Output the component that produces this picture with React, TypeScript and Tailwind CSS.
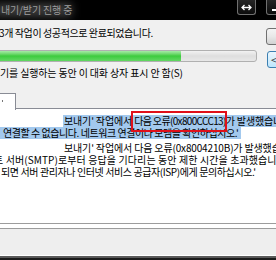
export default function App() {
  return (
    <div className="w-[276px] h-[260px] overflow-hidden bg-[#f0f0f0] text-black font-['Noto_Sans_CJK_KR','Noto_Sans',sans-serif] text-[10px] leading-[12px] tracking-[-0.15px] flex flex-col">
      {/* title bar */}
      <div className="relative h-[20px] shrink-0 bg-black flex overflow-hidden">
        <div className="absolute left-[-6px] top-[3px] w-[78px] h-[14px] bg-[#3a3a3a] blur-[4px]" />
        <span className="relative w-[237px] shrink-0 pl-[1px] pt-[4px] text-[#9c9c9c] whitespace-nowrap">내기/받기 진행 중</span>
        <div className="relative w-[19px] h-[15px] shrink-0 rounded-b-[3px] border border-t-0 border-[#707070] bg-gradient-to-b from-[#262626] to-[#0c0c0c] flex items-center justify-center">
          <svg width="11" height="7" viewBox="0 0 11 7" fill="none" stroke="white" strokeWidth="1.3">
            <path d="M1 3.5h9M3.5 1L1 3.5 3.5 6M7.5 1L10 3.5 7.5 6" />
          </svg>
        </div>
        <div className="relative ml-[10px] w-[20px] h-[15px] shrink-0 rounded-b-[3px] border border-t-0 border-[#707070] bg-gradient-to-b from-[#262626] to-[#0c0c0c]">
          <div className="absolute left-[5px] top-[9px] w-[6px] h-[2px] bg-white" />
        </div>
      </div>

      {/* status */}
      <div className="flex h-[28px] shrink-0">
        <div className="w-[267px] shrink-0 pt-[7px] -ml-[1px] tracking-[-0.4px] whitespace-nowrap overflow-hidden">3개 작업이 성공적으로 완료되었습니다.</div>
        <div className="mt-[8px] h-[17px] w-[20px] shrink-0 rounded-[3px] border border-[#707070] bg-gradient-to-b from-[#f4f4f4] via-[#e8e8e8] to-[#d2d2d2]" />
      </div>

      {/* progress */}
      <div className="flex h-[19px] shrink-0">
        <div className="mt-[2px] -ml-[4px] w-[261px] h-[12px] shrink-0 rounded-[3px] border border-[#b0b0b0] bg-gradient-to-b from-[#f2f2f2] via-[#dedede] to-[#e8e8e8] overflow-hidden flex">
          <div className="w-[184px] h-full bg-gradient-to-b from-[#a6eba6] via-[#3ccb3c] to-[#62d862]" />
        </div>
        <div className="ml-[10px] mt-[3px] h-[17px] w-[20px] shrink-0 rounded-[3px] border border-[#3c7fb1] bg-gradient-to-b from-[#eaf6fd] to-[#bee6fd] pl-[3px] text-[#333] leading-[15px]">&lt;</div>
      </div>

      <div className="h-[12px] shrink-0 whitespace-nowrap">기를 실행하는 동안 이 대화 상자 표시 안 함(S)</div>

      {/* tabs */}
      <div className="mt-[14px] flex h-[16px] shrink-0">
        <div className="relative z-10 w-[16px] h-[17px] shrink-0 bg-white border-t border-r border-[#898c95]">
          <div className="absolute left-[2px] top-[6px] w-[1px] h-[2px] bg-[#777]" />
        </div>
        <div className="flex-1 border-b border-[#898c95]" />
      </div>

      {/* error list */}
      <div className="h-[114px] shrink-0 bg-white pt-[6px] whitespace-nowrap overflow-hidden">
        <div className="ml-[63px] pl-[1px] h-[12px] bg-[#a3c9ee]">
          보내기' 작업에서{' '}
          <span className="relative tracking-[-0.65px]">
            다음 오류(0x800CCC13)
            <span className="absolute -left-[3px] -right-[1px] -top-[2px] -bottom-[4px] border-2 border-[#e0101a]" />
          </span>
          가 발생했습니다.
        </div>
        <div className="w-[241px] h-[12px] pl-[3px] tracking-[-0.45px] bg-[#a3c9ee]">연결할 수 없습니다. 네트워크 연결이나 모뎀을 확인하십시오.'</div>
        <div className="mt-[3px] pl-[64px] h-[12px]">보내기' 작업에서 다음 오류(0x8004210B)가 발생했습니다.</div>
        <div className="h-[12px] -ml-[6px] tracking-[0.1px]">트 서버(SMTP)로부터 응답을 기다리는 동안 제한 시간을 초과했습니다. 이</div>
        <div className="h-[12px] pl-[1px] tracking-[-0.4px]">되면 서버 관리자나 인터넷 서비스 공급자(ISP)에게 문의하십시오.'</div>
      </div>

      {/* bottom frame */}
      <div className="h-[1px] shrink-0 bg-[#9c9c9c]" />
      <div className="h-[4px] shrink-0 bg-white" />
      <div className="h-[1px] shrink-0 bg-[#9c9c9c]" />
      <div className="h-[26px] shrink-0 bg-[#eeeeee]" />
      <div className="h-[1px] shrink-0 bg-white" />
      <div className="h-[2px] shrink-0 bg-[#5a5a5a]" />
      <div className="h-[2px] shrink-0 bg-[#1a1a1a]" />
    </div>
  )
}
